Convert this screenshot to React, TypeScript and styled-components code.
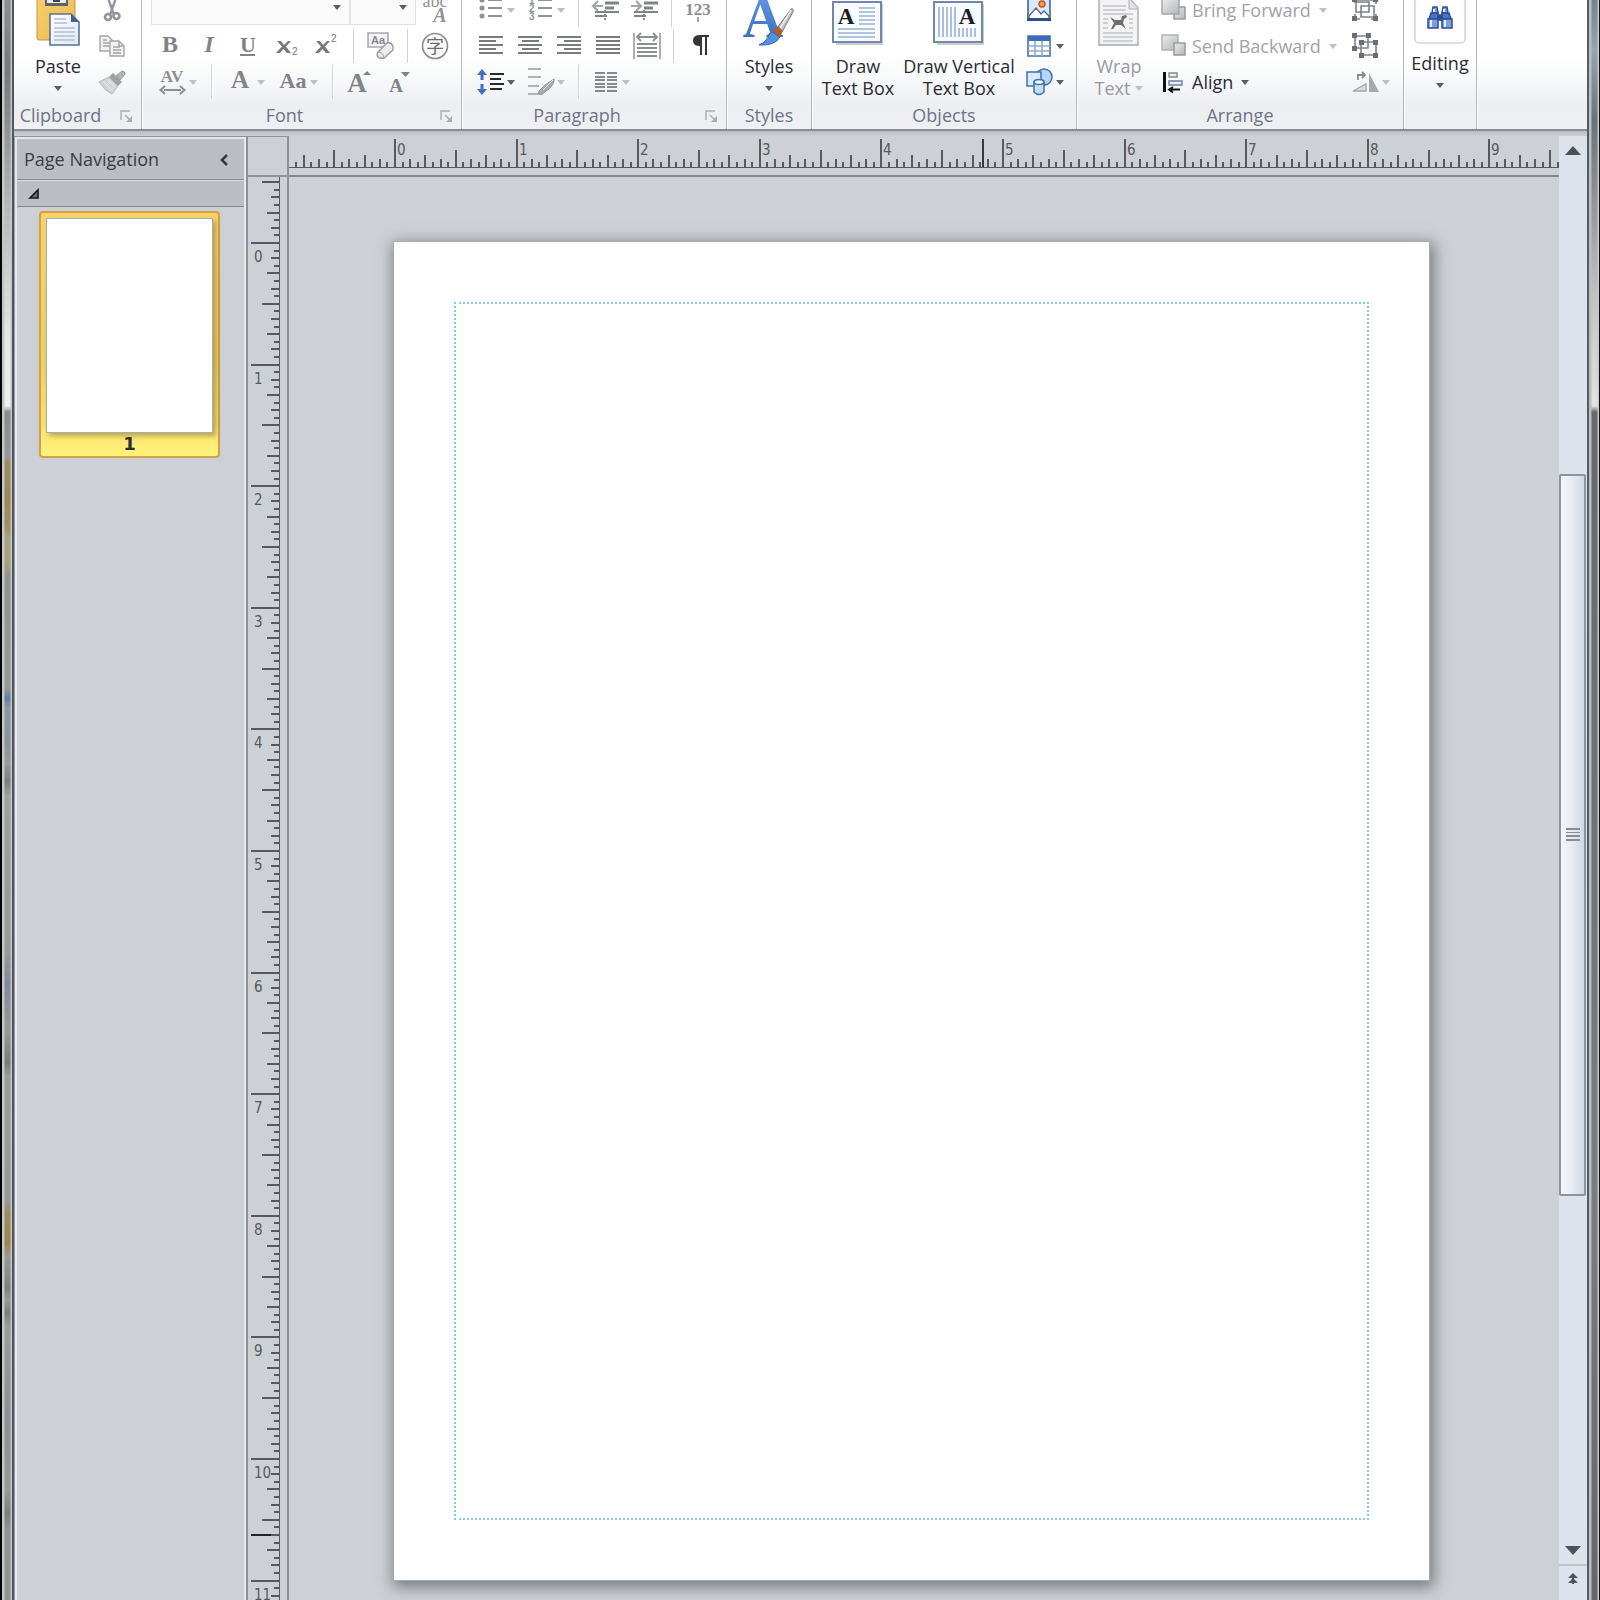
import React from "react";
import styled, { createGlobalStyle } from "styled-components";

const GlobalStyle = createGlobalStyle`
  *, *::before, *::after { box-sizing: border-box; }
  body {
    margin: 0;
    background: #cdd0d5;
    font-family: "Open Sans", "Noto Sans", sans-serif;
    font-size: 18px;
    color: #2b2b33;
  }
  button { font: inherit; color: inherit; border: 0; padding: 0; background: none; }
  button svg { overflow: visible; }
`;

const Window = styled.div`
  display: flex;
  height: 100vh;
  overflow: hidden;
`;

const LeftFrame = styled.div`
  flex: 0 0 14px;
  border-left: 2px solid #050507;
  border-right: 2px solid #50555b;
  background:
    linear-gradient(90deg, #c4c6c8 0 2px, transparent 3px 8px, #c4c6c8 9px 10px),
    linear-gradient(180deg,
      #8d8e91 0, #77797d 70px, #8b8d90 120px, #b4b5b7 200px, #e4e4e4 330px, #f0f0f0 406px,
      #8b8c8e 412px, #989899 456px, #988d62 464px, #9c8756 500px, #a09262 530px, #a5a181 536px, #a5a181 566px,
      #929292 574px, #999 688px, #5f80a3 698px, #8f979f 708px, #8b929b 740px, #999 764px,
      #7c7d7e 781px, #a0a0a0 796px, #999 950px, #838998 985px, #999 1030px, #7b7b7b 1063px, #9a9a9a 1076px,
      #999 1200px, #9b8d60 1212px, #9b8650 1244px, #999 1256px, #808080 1288px, #999 1300px,
      #7c7c7c 1313px, #9c9c9c 1326px, #8d9095 1420px, #999 1490px, #7e7e7e 1514px, #949496 1530px, #929292 100%);
`;

const RightFrame = styled.div`
  flex: 0 0 13px;
  border-left: 2px solid #575c63;
  border-right: 1px solid #111;
  background:
    linear-gradient(90deg, #b9bcc0 0 2px, transparent 3px 8px, #c9cacc 9px 10px),
    linear-gradient(180deg, #77818d 0, #9aa3ae 50px, #6c7279 120px, #8b8f93 190px, #c2c4c4 300px, #e2e2e2 406px, #66696e 412px, #6e7378 800px, #7a7d82 1190px, #64666b 100%);
`;

const Main = styled.main`
  flex: 1;
  min-width: 0;
  display: flex;
  flex-direction: column;
`;

/* ---------- Ribbon ---------- */

const Ribbon = styled.header`
  flex: none;
  display: flex;
  height: 131px;
  overflow: hidden;
  border-bottom: 2px solid #8a8e94;
  background: linear-gradient(#fff 0, #fff 42%, #f8f9fa 60%, #eceef2 82%, #eff0f4 100%);
`;

const Group = styled.section<{ $width: number }>`
  flex: 0 0 ${(p) => p.$width}px;
  display: flex;
  flex-direction: column;
  justify-content: flex-end;
  border-right: 1px solid #b3b7be;
  box-shadow: 1px 0 0 #fff;
`;

const GroupBody = styled.div<{ $pad?: number; $end?: number; $center?: boolean }>`
  flex: none;
  display: flex;
  align-items: flex-end;
  justify-content: ${(p) => (p.$center ? "center" : "flex-start")};
  padding-left: ${(p) => p.$pad ?? 0}px;
  padding-right: ${(p) => p.$end ?? 0}px;
`;

const GroupFooter = styled.div`
  position: relative;
  flex: none;
  height: 29px;
  display: flex;
  align-items: center;
  justify-content: center;
`;

const GroupTitle = styled.h2<{ $launcher?: boolean }>`
  margin: 0;
  padding-right: ${(p) => (p.$launcher ? 34 : 0)}px;
  font-size: 18px;
  line-height: 22px;
  font-weight: 400;
  color: #6e7486;
`;

const Launcher = styled.button`
  position: absolute;
  right: 7px;
  top: 8px;
  width: 16px;
  height: 16px;
  display: grid;
  place-items: center;
`;

const Stack = styled.div<{ $grow?: boolean }>`
  display: flex;
  flex-direction: column;
  flex: ${(p) => (p.$grow ? "1" : "none")};
`;

const Row = styled.div`
  display: flex;
  align-items: center;
  height: 36px;
`;

const IconButton = styled.button<{ $narrow?: boolean }>`
  width: ${(p) => (p.$narrow ? 33 : 39)}px;
  height: 36px;
  display: grid;
  place-items: center;
`;

const SplitButton = styled.button<{ $wide?: boolean }>`
  width: ${(p) => (p.$wide ? 53 : 50)}px;
  height: 36px;
  display: flex;
  align-items: center;
  justify-content: center;
  gap: 3px;
`;

const IconSlot = styled.span`
  width: 27px;
  display: grid;
  place-items: center;
`;

const ArrowSlot = styled.span`
  width: 8px;
  display: grid;
`;

const Divider = styled.span`
  width: 15px;
  height: 34px;
  background: linear-gradient(90deg, transparent 7px, #cfd3d9 7px 8px, #fff 8px 9px, transparent 9px);
`;

const Combo = styled.div<{ $width: number }>`
  position: relative;
  width: ${(p) => p.$width}px;
  height: 34px;
  svg { position: absolute; right: 9px; bottom: 17px; pointer-events: none; }
`;

const ComboSelect = styled.select`
  appearance: none;
  width: 100%;
  height: 32px;
  border: 1px solid #dfe2e8;
  border-radius: 0;
  background: #fafafb;
`;

const BigButton = styled.button<{ $width: number; $lift?: number; $dim?: boolean }>`
  width: ${(p) => p.$width}px;
  padding-bottom: ${(p) => p.$lift ?? 1}px;
  display: flex;
  flex-direction: column;
  align-items: center;
  white-space: nowrap;
  color: ${(p) => (p.$dim ? "#9a9a9e" : "inherit")};
`;

const BigIcon = styled.span`
  height: 48px;
  margin-bottom: 8px;
  display: grid;
  place-items: center;
`;

const BigLine = styled.span`
  height: 22px;
  line-height: 22px;
  display: flex;
  align-items: center;
  gap: 5px;
`;

const Command = styled.button<{ $dim?: boolean }>`
  height: 36px;
  padding-left: 4px;
  display: flex;
  align-items: center;
  gap: 5px;
  line-height: 22px;
  white-space: nowrap;
  color: ${(p) => (p.$dim ? "#a2a2a6" : "inherit")};
  svg:last-child { margin-left: 3px; }
`;

const FramedIcon = styled.span`
  width: 52px;
  height: 52px;
  margin-bottom: 8px;
  display: flex;
  align-items: flex-end;
  justify-content: center;
  padding-bottom: 13px;
  border: 2px solid #dcdfe7;
  border-radius: 5px;
  background: #fff;
`;

const Arrow = ({ dim = false, hidden = false }: { dim?: boolean; hidden?: boolean }) => (
  <svg width="8" height="5" viewBox="0 0 8 5" visibility={hidden ? "hidden" : "visible"} aria-hidden="true">
    <path d="M0 0H8L4 5Z" fill={dim ? "#bcc0c5" : "#5b5e63"} />
  </svg>
);

const LauncherIcon = () => (
  <svg width="13" height="13" viewBox="0 0 13 13" fill="none" stroke="#a9adb3" strokeWidth="1.4" aria-hidden="true">
    <path d="M1 10V1H10" />
    <path d="M5 5L10 10" />
    <path d="M12 6V12H6Z" fill="#a9adb3" stroke="none" />
  </svg>
);

/* ---------- Icons ---------- */

const serif = '"Liberation Serif", serif';

const PasteIcon = () => (
  <svg width="46" height="48" viewBox="0 0 46 48">
    <defs>
      <linearGradient id="board" x1="0" y1="0" x2="1" y2="1">
        <stop offset="0" stopColor="#f7cf6c" />
        <stop offset="1" stopColor="#e9b84f" />
      </linearGradient>
      <linearGradient id="sheet" x1="0" y1="0" x2="1" y2="1">
        <stop offset="0" stopColor="#fff" />
        <stop offset="1" stopColor="#dde7f5" />
      </linearGradient>
    </defs>
    <rect x="2" y="0" width="38" height="41" rx="2" fill="url(#board)" stroke="#c99540" />
    <path d="M10 0H33V7H10Z" fill="#5e626c" />
    <path d="M12 0H31V4H12Z" fill="#e9ebef" />
    <path d="M18 0h7v3h-7z" fill="#444" />
    <path d="M15 15H36L44 23V46H15Z" fill="url(#sheet)" stroke="#5b7193" strokeWidth="1.6" />
    <path d="M36 15V23H44Z" fill="#3d6097" />
    <path d="M19 20H31M19 24H32M19 29H40M19 33H40M19 37H40M19 41H40" stroke="#b4bed3" strokeWidth="1.3" />
  </svg>
);

const CutIcon = () => (
  <svg width="20" height="30" viewBox="0 0 20 30" fill="none" stroke="#929599">
    <path d="M5 0L12 20M15 0L8 20" strokeWidth="2.4" />
    <circle cx="6" cy="22" r="3" strokeWidth="2.6" />
    <circle cx="14.500" cy="21" r="3" strokeWidth="2.6" />
  </svg>
);

const CopyIcon = () => (
  <svg width="26" height="22" viewBox="0 0 26 22" fill="#f2f2f2" stroke="#a3a5a8" strokeWidth="1.4">
    <path d="M1 1H9L13 5V16H1Z" />
    <path d="M4 5H8M4 8H10M4 11H10" />
    <path d="M11 6H20L25 11V21H11Z" />
    <path d="M20 6V11H25M14 12H21M14 15H22M14 18H22" fill="none" />
  </svg>
);

const FormatPainterIcon = () => (
  <svg width="28" height="25" viewBox="0 0 28 25">
    <path d="M1 12L11 7L20 16L14 24Q6 20 1 12Z" fill="#d4d5d6" stroke="#b1b3b5" />
    <path d="M11 7L15 3L24 12L20 16Z" fill="#9fa1a4" />
    <path d="M18 6L24 1Q27 1 27 4L22 10Z" fill="#b0b2b4" stroke="#999b9e" />
    <path d="M6 12L14 20M10 10L17 17" stroke="#ececec" />
  </svg>
);

const Glyph = ({ children, size = 24, italic = false, underline = false }: { children: React.ReactNode; size?: number; italic?: boolean; underline?: boolean }) => (
  <svg width="27" height="26" viewBox="0 0 27 26" fontFamily={serif} fontWeight="700" fill="#808388" textAnchor="middle">
    <text x="13" y="19" fontSize={size} fontStyle={italic ? "italic" : "normal"}>{children}</text>
    {underline && <path d="M5 21H20V23H5Z" />}
  </svg>
);

const ScriptIcon = ({ up }: { up?: boolean }) => (
  <svg width="27" height="26" viewBox="0 0 27 26" fill="#74777c" fontFamily='"Liberation Sans", sans-serif' fontWeight="700">
    <path d="M3 8H7L10 12L14 8H17L12 13.500L17 20H13L9.500 16L6 20H2L8 13.500Z" />
    <text x="18" y={up ? 9 : 22} fontSize="10" fontWeight="400">2</text>
  </svg>
);

const SpacingIcon = () => (
  <svg width="27" height="26" viewBox="0 0 27 26" fill="#8b8e92">
    <text x="13" y="13" fontFamily={serif} fontSize="17" fontWeight="700" textAnchor="middle">AV</text>
    <path d="M5 21H22M6 17L1.500 21L6 25M21 17L25.500 21L21 25" fill="none" stroke="#8b8e92" strokeWidth="2" />
  </svg>
);

const SizeIcon = ({ grow }: { grow?: boolean }) => (
  <svg width="30" height="28" viewBox="0 0 30 28" fill="#808388">
    <text x="12" y="24" fontFamily={serif} fontSize={grow ? 27 : 19} fontWeight="700" textAnchor="middle">A</text>
    <path d={grow ? "M18 7L22 3L26 7Z" : "M17 4H26L21.500 9Z"} />
  </svg>
);

const ClearIcon = () => (
  <svg width="28" height="28" viewBox="0 0 28 28">
    <path d="M1 1H21V15H1Z" fill="#f2f2f2" stroke="#a9abae" strokeWidth="1.6" />
    <text x="11" y="12" fontFamily='"Liberation Sans", sans-serif' fontWeight="700" fontSize="11" textAnchor="middle" fill="#85888c">Aa</text>
    <path d="M11 20L20 11Q24 10 26 14V18L17 26Q11 27 10 23Z" fill="#ececec" stroke="#9a9c9f" strokeWidth="1.4" />
    <path d="M11 20Q16 20 17 26" fill="none" stroke="#9a9c9f" />
  </svg>
);

const EncloseIcon = () => (
  <svg width="28" height="28" viewBox="0 0 28 28">
    <circle cx="14" cy="14" r="12.500" fill="#fafafa" stroke="#8b8d91" strokeWidth="1.6" />
    <text x="14" y="21" fontFamily='"Noto Sans CJK SC", sans-serif' fontSize="18" textAnchor="middle" fill="#6a6c70">字</text>
  </svg>
);

const PhoneticIcon = () => (
  <svg width="28" height="34" viewBox="0 0 28 34" fill="#8f9296" fontFamily={serif}>
    <text x="13" y="14" fontSize="18" textAnchor="middle">abc</text>
    <text x="18" y="29" fontSize="20" fontWeight="700" fontStyle="italic" textAnchor="middle">A</text>
  </svg>
);

const BulletsIcon = ({ numbers }: { numbers?: boolean }) => (
  <svg width="26" height="32" viewBox="0 0 26 32" fill="#8f9296">
    {[6, 14, 22].map((y, i) => (
      <g key={y}>
        {numbers ? (
          <text x="1" y={y + 4} fontFamily='"Liberation Sans", sans-serif' fontSize="10" fontWeight="700">{i + 1}</text>
        ) : (
          <circle cx="4" cy={y} r="2.500" />
        )}
        <path d={`M10 ${y}H24`} stroke="#8f9296" strokeWidth="2" />
      </g>
    ))}
  </svg>
);

const IndentIcon = ({ right }: { right?: boolean }) => (
  <svg width="28" height="32" viewBox="0 0 28 32" fill="none" stroke="#808388" strokeWidth="1.8">
    <path d="M13 4H27M3 18H27M3 22H15" />
    <path d="M13 9H27M13 14H22" strokeWidth="3" />
    <path d="M13 16V27" strokeDasharray="2 2" />
    <path d={right ? "M0 12H9M5 7L10 12L5 17" : "M2 12H11M6 7L1 12L6 17"} stroke="#a3a5a8" strokeWidth="2.2" />
  </svg>
);

const NumbersIcon = () => (
  <svg width="27" height="36" viewBox="0 0 27 36" fill="#8b8e92">
    <path d="M13 2V8M13 25V30" stroke="#8b8e92" strokeWidth="1.6" />
    <text x="13" y="23" fontFamily={serif} fontWeight="700" fontSize="17" textAnchor="middle">123</text>
  </svg>
);

type Align = "left" | "center" | "right" | "full";

const AlignIcon = ({ align }: { align: Align }) => {
  const x = align === "left" ? 0 : align === "center" ? 4 : 7;
  return (
    <svg width="24" height="20" viewBox="0 0 24 20" fill="#787b80">
      {[0, 4, 8, 12, 16].map((y, i) => {
        const short = align !== "full" && i % 2 === 1;
        return <rect key={y} x={short ? x : 0} y={y} width={short ? 17 : 24} height="2" />;
      })}
    </svg>
  );
};

const DistributeIcon = () => (
  <svg width="28" height="27" viewBox="0 0 28 27" fill="none" stroke="#8b8e92">
    <path d="M1 0V26M27 0V26" strokeWidth="1.4" />
    <path d="M4 4H24M8 0L4 4L8 8M20 0L24 4L20 8" strokeWidth="1.8" />
    <path d="M4 11H24M4 15H24M4 19H24M4 23H24" strokeWidth="2" />
  </svg>
);

const PilcrowIcon = () => (
  <svg width="20" height="24" viewBox="0 0 20 24" fill="#333539">
    <path d="M9 1H18V3H16V21H14V3H11V21H9V12Q2 12 2 6.500Q2 1 9 1Z" />
  </svg>
);

const LineSpacingIcon = () => (
  <svg width="27" height="28" viewBox="0 0 27 28">
    <path d="M5 1L10 7H6.500V12H3.500V7H0ZM5 27L10 21H6.500V16H3.500V21H0Z" fill="#3f6fc0" />
    <path d="M13 6H27M13 11H24M13 16H27M13 21H25" stroke="#26282b" strokeWidth="2" />
  </svg>
);

const ShadingIcon = () => (
  <svg width="28" height="28" viewBox="0 0 28 28">
    <path d="M1 1H14M1 9H14M1 18H12M1 26H16" stroke="#b0b2b5" strokeWidth="2" />
    <path d="M27 11Q28 15 22 21L15 26Q10 27 12 23L18 17Z" fill="#a9abae" stroke="#94969a" />
    <path d="M26 12L16 22" stroke="#e2e3e4" />
  </svg>
);

const ColumnsIcon = () => (
  <svg width="22" height="20" viewBox="0 0 22 20" stroke="#85888c" strokeWidth="1.8">
    {[1, 5, 8, 12, 15, 19].map((y) => <path key={y} d={`M0 ${y}H10M12 ${y}H22`} />)}
  </svg>
);

const StylesIcon = () => (
  <svg width="50" height="50" viewBox="0 0 50 50">
    <defs>
      <linearGradient id="letterA" x1="0" y1="0" x2="0" y2="1">
        <stop offset="0" stopColor="#6d9ee6" />
        <stop offset="1" stopColor="#2f66b8" />
      </linearGradient>
    </defs>
    <text x="19" y="38" fontFamily={serif} fontSize="56" fontWeight="700" textAnchor="middle" fill="url(#letterA)">A</text>
    <path d="M33 29L47 10Q50 9 49 13L38 33Z" fill="#b9bcc0" stroke="#7a7d83" />
    <path d="M47 11L36 30" stroke="#eceef0" strokeWidth="1.5" />
    <path d="M28 33L34 27L39 32L36 38Q30 38 28 33Z" fill="#a9622e" />
    <path d="M28 33L36 38Q31 47 15 46Q24 42 25 35Z" fill="#5791dc" stroke="#2c66b4" />
  </svg>
);

const TextBoxIcon = ({ vertical }: { vertical?: boolean }) => (
  <svg width="52" height="46" viewBox="0 0 52 46">
    <path d="M4 4H51V45H4Z" fill="#c8ccd6" />
    <path d="M1 2H49V42H1Z" fill="#f8fbff" stroke="#7487a6" strokeWidth="2" />
    <text x={vertical ? 34 : 14} y="24" fontFamily={serif} fontSize="23" fontWeight="700" textAnchor="middle" fill="#1b1d24">A</text>
    <path
      d={
        vertical
          ? "M6 7V37M10 7V37M14 7V37M18 7V37M22 7V37M26 28V37M30 28V37M34 28V37M38 28V37M42 28V37"
          : "M27 8H43M27 12H43M27 16H43M27 20H43M27 24H43M6 29H43M6 33H43M6 37H43"
      }
      stroke="#98b3d2" strokeWidth="1.6"
    />
  </svg>
);

const PictureIcon = () => (
  <svg width="24" height="32" viewBox="0 0 24 32">
    <path d="M1 1H23V25H1Z" fill="#d9e8fb" stroke="#42639a" strokeWidth="1.6" />
    <circle cx="15" cy="10" r="3" fill="#f6a13a" stroke="#c4502e" strokeWidth="1.4" />
    <path d="M2 22L9 14L14 20L17 17L22 22V25H2Z" fill="#fff" stroke="#54698c" strokeWidth="1.4" />
    <path d="M0 24H24V27H0Z" fill="#2c4d8a" />
  </svg>
);

const TableIcon = () => (
  <svg width="24" height="22" viewBox="0 0 24 22">
    <path d="M1 1H23V21H1Z" fill="#fff" stroke="#4a6fae" strokeWidth="1.6" />
    <path d="M1 1H23V6H1Z" fill="#3f6cb8" />
    <path d="M1 11H23M1 16H23M8 6V21M15 6V21" stroke="#8eabd6" strokeWidth="1.6" />
  </svg>
);

const ShapesIcon = () => (
  <svg width="27" height="28" viewBox="0 0 27 28" stroke="#3e6fae" strokeWidth="1.5">
    <circle cx="18" cy="9" r="8" fill="#b9d4f1" />
    <path d="M1 4H15V18H1Z" fill="#dcebfb" />
    <path d="M8 14V24Q13 29 18 24V14Z" fill="#c5e0f6" />
    <ellipse cx="13" cy="14" rx="5" ry="2.500" fill="#eef7ff" />
  </svg>
);

const WrapIcon = () => (
  <svg width="42" height="50" viewBox="0 0 42 50">
    <path d="M1 0H32L40 9V46H1Z" fill="#f3f3f4" stroke="#b9bbbe" strokeWidth="1.8" />
    <path d="M31 0V10H40" fill="#e2e2e3" stroke="#b0b2b5" />
    <path d="M5 7H28M5 11H28M5 15H35M5 20H10M31 20H35M5 24H10M31 24H35M5 29H10M31 29H35M5 34H35M5 38H35M5 42H35" stroke="#c3c5c8" strokeWidth="1.4" />
    <path d="M12 18L17 21H23L24 17L28 16L29 18L26 20L25 24L28 30L23 26H18L15 30H13L16 24Z" fill="#6c6e72" />
  </svg>
);

const LayerIcon = ({ back }: { back?: boolean }) => (
  <svg width="26" height="24" viewBox="0 0 26 24">
    <defs>
      <linearGradient id="layer" x1="0" y1="0" x2="1" y2="1">
        <stop offset="0" stopColor="#ededed" />
        <stop offset="1" stopColor="#b3b5b8" />
      </linearGradient>
    </defs>
    {back && <path d="M1 1H17V16H1Z" fill="url(#layer)" stroke="#b0b2b4" strokeWidth="1.500" />}
    <path d="M13 9H24V21H13Z" fill="url(#layer)" stroke="#999b9e" strokeWidth="1.500" />
    {!back && <path d="M1 1H18V16H1Z" fill="url(#layer)" stroke="#a6a8ab" strokeWidth="1.500" />}
  </svg>
);

const AlignObjectsIcon = () => (
  <svg width="26" height="22" viewBox="0 0 26 22">
    <path d="M2 1H5V21H2Z" fill="#101114" />
    <path d="M8 2H16V6H8Z" fill="#eee" stroke="#85888c" strokeWidth="1.4" />
    <path d="M8 10H21V14H8Z" fill="#e4eefb" stroke="#6c7f9e" strokeWidth="1.4" />
    <path d="M19 18.500H10M12 16L8 18.500L12 21.500" fill="none" stroke="#101114" strokeWidth="1.8" />
  </svg>
);

const GroupIcon = ({ spread }: { spread?: boolean }) => (
  <svg width="27" height="26" viewBox="0 0 27 26" fill="none" stroke="#808388" strokeWidth="1.6">
    {spread ? (
      <path d="M3 3H16V15H3ZM9 9H24V22H9Z" />
    ) : (
      <path d="M3 0V6M0 3H18M24 3H18M24 3V7M3 17V22M24 17V22M3 22H8M19 22H24M4 5H17V15H4ZM9 9H22V20H9Z" />
    )}
    <path
      fill="#6b6e73" stroke="none"
      d={
        spread
          ? "M0 0h5v5h-5zM14 0h5v5h-5zM0 13h5v5h-5zM7 7h5v5h-5zM21 7h5v5h-5zM7 20h5v5h-5zM21 20h5v5h-5z"
          : "M0 0h5v5h-5zM21 0h5v5h-5zM0 19h5v5h-5zM21 19h5v5h-5z"
      }
    />
  </svg>
);

const RotateIcon = () => (
  <svg width="27" height="22" viewBox="0 0 27 22" fill="#a6a8ab">
    <path d="M17 2V21H27Z" />
    <path d="M1 20L14 13V20Z" fill="#dcdddf" stroke="#a6a8ab" strokeWidth="1.4" />
    <path d="M6 9V4H12M10 1L13 4L10 7" fill="none" stroke="#85888c" strokeWidth="1.8" />
  </svg>
);

const BinocularsIcon = () => (
  <svg width="26" height="24" viewBox="0 0 26 24" fill="#7da0dc" stroke="#2b4f97" strokeWidth="1.5">
    <path d="M6 2H10L11 8H5ZM16 2H20L21 8H15Z" />
    <path d="M4 8H11V14H2ZM15 8H22L24 14H15Z" fill="#4c74bc" />
    <path d="M1 14H11V23H1ZM15 14H25V23H15Z" />
    <path d="M11 10H15V15H11Z" fill="#2b4f97" />
    <path d="M4 15V22M18 15V22M7 4V7M17 4V7" stroke="#e4eefc" strokeWidth="2" />
  </svg>
);

/* ---------- Workspace ---------- */

const Workspace = styled.div`
  flex: 1;
  min-height: 0;
  display: flex;
  padding-top: 5px;
  background: linear-gradient(#b9bcc1 0, #cdd0d5 5px);
`;

const NavPane = styled.aside`
  flex: 0 0 234px;
  border-top: 1px solid #90949a;
  border-left: 1px solid #9a9ea4;
  border-right: 2px solid #8d9299;
`;

const NavInner = styled.div`
  height: 100%;
  border: 2px solid #e6e8ec;
  border-bottom: 0;
`;

const NavHeader = styled.div`
  height: 41px;
  display: flex;
  align-items: center;
  justify-content: space-between;
  padding: 0 16px 0 7px;
  background: #bbbec3;
  border-bottom: 1px solid #85898f;
`;

const NavTitle = styled.h2`
  margin: 0;
  font-size: 18px;
  line-height: 22px;
  font-weight: 400;
  color: #3b3b45;
`;

const SectionToggle = styled.button`
  width: 100%;
  height: 27px;
  display: flex;
  align-items: center;
  padding-left: 12px;
  background: #bbbec3;
  border-top: 1px solid #d9dbdf;
  border-bottom: 1px solid #85898f;
`;

const Thumb = styled.button`
  width: 181px;
  margin: 4px 0 0 22px;
  padding: 5px 5px 1px;
  border: 2px solid #d3a047;
  border-radius: 4px;
  background: linear-gradient(#fbd468 0, #efd060 60%, #f6e06c 85%, #fff37c 100%);
`;

const ThumbPage = styled.span`
  display: block;
  height: 215px;
  background: #fff;
  border: 1px solid #a4aebe;
  box-shadow: 3px 3px 5px rgba(110, 90, 20, 0.45);
`;

const ThumbLabel = styled.span`
  display: block;
  font-family: "DejaVu Sans", sans-serif;
  font-size: 18px;
  line-height: 22px;
  font-weight: 700;
`;

const Editor = styled.section`
  flex: 1;
  min-width: 0;
  display: grid;
  grid-template: 41px 1fr / 41px 1fr;
`;

const Corner = styled.div`
  border-top: 1px solid #8d9299;
  border-right: 2px solid #8d9299;
  border-bottom: 2px solid #8d9299;
`;

const TopRuler = styled.div`
  overflow: hidden;
  border-bottom: 2px solid #83888f;
`;

const SideRuler = styled.div`
  overflow: hidden;
  border-right: 2px solid #8d9299;
`;

const RulerSvg = styled.svg`
  display: block;
  width: 100%;
  height: 100%;
  font-family: "DejaVu Sans Condensed", "DejaVu Sans", sans-serif;
  font-size: 15px;
  fill: #56595f;
`;

const Canvas = styled.div`
  overflow: hidden;
  padding: 64px 104px;
`;

const Page = styled.article`
  width: 1037px;
  height: 1340px;
  padding: 60px;
  background: #fff;
  border: 1px solid #a3abb4;
  box-shadow: 2px 4px 14px 2px rgba(60, 66, 74, 0.6);
`;

const Margins = styled.div`
  height: 100%;
  border: 2px dotted #86c5ff;
`;

const ScrollColumn = styled.div`
  flex: 0 0 28px;
  display: flex;
  flex-direction: column;
  background: #dee2eb;
`;

const ScrollButton = styled.button`
  height: 28px;
  display: grid;
  place-items: center;
`;

const Track = styled.div`
  flex: 1;
  display: grid;
  grid-template-rows: 310fr 721fr 340fr;
`;

const Handle = styled.div`
  grid-row: 2;
  width: 27px;
  display: grid;
  place-items: center;
  border: 2px solid #8d949d;
  border-radius: 2px;
  background: linear-gradient(90deg, #f6f7fa, #e6e9ef 55%, #cfd8e2);
`;

const PageJump = styled.button`
  height: 36px;
  display: flex;
  justify-content: center;
  padding-top: 7px;
  border-top: 2px solid #c2c5cb;
`;

const INCH = 121.6;

const tickLength = (i: number) => {
  if (i % 16 === 0) return 28;
  if (i % 8 === 0) return 17;
  if (i % 4 === 0) return 12;
  return i % 2 === 0 ? 8 : 5;
};

const Ruler = ({ vertical, origin, marker }: { vertical?: boolean; origin: number; marker: number }) => {
  const ticks: React.ReactNode[] = [];
  const base = 31;
  for (let i = -13; i <= 12 * 16; i++) {
    const at = Math.round(origin + (i * INCH) / 16);
    const start = base - tickLength(i);
    ticks.push(
      vertical
        ? <rect key={i} x={start} y={at} width={base - start} height="2" />
        : <rect key={i} x={at} y={start} width="2" height={base - start} />
    );
    if (i >= 0 && i % 16 === 0) {
      ticks.push(
        vertical
          ? <text key={`n${i}`} x="6" y={at + 20}>{i / 16}</text>
          : <text key={`n${i}`} x={at + 3} y="19">{i / 16}</text>
      );
    }
  }
  return (
    <RulerSvg role="img" aria-label={vertical ? "Vertical ruler" : "Horizontal ruler"} shapeRendering="crispEdges">
      {ticks}
      {vertical ? (
        <>
          <rect x={base} y="0" width="1" height="100%" />
          <rect x="3" y={marker} width="20" height="2" fill="#222428" />
        </>
      ) : (
        <>
          <rect x="0" y={base} width="100%" height="1" />
          <rect x={marker} y="3" width="2" height="28" fill="#37393e" />
        </>
      )}
    </RulerSvg>
  );
};

const Footer = ({ title, launcher }: { title: string; launcher?: boolean }) => (
  <GroupFooter>
    <GroupTitle $launcher={launcher}>{title}</GroupTitle>
    {launcher && <Launcher aria-label={`${title} options`}><LauncherIcon /></Launcher>}
  </GroupFooter>
);

const Split = ({ label, wide, dim, plain, children }: { label: string; wide?: boolean; dim?: boolean; plain?: boolean; children: React.ReactNode }) => (
  <SplitButton $wide={wide} aria-label={label}>
    <IconSlot>{children}</IconSlot>
    <ArrowSlot><Arrow dim={dim} hidden={plain} /></ArrowSlot>
  </SplitButton>
);

export default function App() {
  return (
    <>
      <GlobalStyle />
      <Window>
        <LeftFrame />
        <Main>
          <Ribbon>
            <Group $width={128}>
              <GroupBody $pad={7}>
                <BigButton $width={74}>
                  <BigIcon><PasteIcon /></BigIcon>
                  <BigLine>Paste</BigLine>
                  <BigLine><Arrow /></BigLine>
                </BigButton>
                <Stack>
                  <Row><IconButton $narrow aria-label="Cut"><CutIcon /></IconButton></Row>
                  <Row><IconButton $narrow aria-label="Copy"><CopyIcon /></IconButton></Row>
                  <Row><IconButton $narrow aria-label="Format painter"><FormatPainterIcon /></IconButton></Row>
                </Stack>
              </GroupBody>
              <Footer title="Clipboard" launcher />
            </Group>

            <Group $width={320}>
              <GroupBody $pad={9}>
                <Stack>
                  <Row>
                    <Combo $width={199}><ComboSelect aria-label="Font" /><Arrow /></Combo>
                    <Combo $width={66}><ComboSelect aria-label="Font size" /><Arrow /></Combo>
                    <IconButton aria-label="Phonetic guide"><PhoneticIcon /></IconButton>
                  </Row>
                  <Row>
                    <IconButton aria-label="Bold"><Glyph>B</Glyph></IconButton>
                    <IconButton aria-label="Italic"><Glyph italic>I</Glyph></IconButton>
                    <IconButton aria-label="Underline"><Glyph size={22} underline>U</Glyph></IconButton>
                    <IconButton aria-label="Subscript"><ScriptIcon /></IconButton>
                    <IconButton aria-label="Superscript"><ScriptIcon up /></IconButton>
                    <Divider />
                    <IconButton aria-label="Clear formatting"><ClearIcon /></IconButton>
                    <Divider />
                    <IconButton aria-label="Enclose characters"><EncloseIcon /></IconButton>
                  </Row>
                  <Row>
                    <Split label="Character spacing" wide dim><SpacingIcon /></Split>
                    <Divider />
                    <Split label="Font color" wide dim><Glyph size={25}>A</Glyph></Split>
                    <Split label="Change case" wide dim><Glyph size={22}>Aa</Glyph></Split>
                    <Divider />
                    <IconButton aria-label="Grow font"><SizeIcon grow /></IconButton>
                    <IconButton aria-label="Shrink font"><SizeIcon /></IconButton>
                  </Row>
                </Stack>
              </GroupBody>
              <Footer title="Font" launcher />
            </Group>

            <Group $width={265}>
              <GroupBody $pad={9}>
                <Stack>
                  <Row>
                    <Split label="Bullets" dim><BulletsIcon /></Split>
                    <Split label="Numbering" dim><BulletsIcon numbers /></Split>
                    <Divider />
                    <IconButton aria-label="Decrease indent"><IndentIcon /></IconButton>
                    <IconButton aria-label="Increase indent"><IndentIcon right /></IconButton>
                    <Divider />
                    <IconButton aria-label="Number style"><NumbersIcon /></IconButton>
                  </Row>
                  <Row>
                    <IconButton aria-label="Align left"><AlignIcon align="left" /></IconButton>
                    <IconButton aria-label="Center"><AlignIcon align="center" /></IconButton>
                    <IconButton aria-label="Align right"><AlignIcon align="right" /></IconButton>
                    <IconButton aria-label="Justify"><AlignIcon align="full" /></IconButton>
                    <IconButton aria-label="Distribute"><DistributeIcon /></IconButton>
                    <Divider />
                    <IconButton aria-label="Special characters"><PilcrowIcon /></IconButton>
                  </Row>
                  <Row>
                    <Split label="Line spacing"><LineSpacingIcon /></Split>
                    <Split label="Paragraph shading" dim><ShadingIcon /></Split>
                    <Divider />
                    <Split label="Columns" dim><ColumnsIcon /></Split>
                  </Row>
                </Stack>
              </GroupBody>
              <Footer title="Paragraph" launcher />
            </Group>

            <Group $width={85}>
              <GroupBody $center>
                <BigButton $width={78}>
                  <BigIcon><StylesIcon /></BigIcon>
                  <BigLine>Styles</BigLine>
                  <BigLine><Arrow /></BigLine>
                </BigButton>
              </GroupBody>
              <Footer title="Styles" />
            </Group>

            <Group $width={265}>
              <GroupBody $pad={4}>
                <BigButton $width={84}>
                  <BigIcon><TextBoxIcon /></BigIcon>
                  <BigLine>Draw</BigLine>
                  <BigLine>Text Box</BigLine>
                </BigButton>
                <BigButton $width={118}>
                  <BigIcon><TextBoxIcon vertical /></BigIcon>
                  <BigLine>Draw Vertical</BigLine>
                  <BigLine>Text Box</BigLine>
                </BigButton>
                <Stack>
                  <Row><Split label="Picture" wide plain><PictureIcon /></Split></Row>
                  <Row><Split label="Table" wide><TableIcon /></Split></Row>
                  <Row><Split label="Shapes" wide><ShapesIcon /></Split></Row>
                </Stack>
              </GroupBody>
              <Footer title="Objects" />
            </Group>

            <Group $width={327}>
              <GroupBody $pad={4} $end={6}>
                <BigButton $width={76} $dim>
                  <BigIcon><WrapIcon /></BigIcon>
                  <BigLine>Wrap</BigLine>
                  <BigLine>Text<Arrow dim /></BigLine>
                </BigButton>
                <Stack $grow>
                  <Row><Command $dim><LayerIcon />Bring Forward<Arrow dim /></Command></Row>
                  <Row><Command $dim><LayerIcon back />Send Backward<Arrow dim /></Command></Row>
                  <Row><Command><AlignObjectsIcon />Align<Arrow /></Command></Row>
                </Stack>
                <Stack>
                  <Row><Split label="Group" wide plain><GroupIcon /></Split></Row>
                  <Row><Split label="Ungroup" wide plain><GroupIcon spread /></Split></Row>
                  <Row><Split label="Rotate" wide dim><RotateIcon /></Split></Row>
                </Stack>
              </GroupBody>
              <Footer title="Arrange" />
            </Group>

            <Group $width={73}>
              <GroupBody $center>
                <BigButton $width={72} $lift={33}>
                  <FramedIcon><BinocularsIcon /></FramedIcon>
                  <BigLine>Editing</BigLine>
                  <BigLine><Arrow /></BigLine>
                </BigButton>
              </GroupBody>
            </Group>
          </Ribbon>

          <Workspace>
            <NavPane>
              <NavInner>
                <NavHeader>
                  <NavTitle>Page Navigation</NavTitle>
                  <button aria-label="Collapse pane">
                    <svg width="8" height="12" viewBox="0 0 8 12" fill="none" stroke="#3a3a3e" strokeWidth="2.6">
                      <path d="M7 1L2 6L7 11" />
                    </svg>
                  </button>
                </NavHeader>
                <SectionToggle aria-label="Toggle section">
                  <svg width="10" height="10" viewBox="0 0 10 10">
                    <path d="M9 1V9H1Z" fill="#6b6d71" stroke="#18191b" strokeWidth="1.6" />
                  </svg>
                </SectionToggle>
                <Thumb>
                  <ThumbPage />
                  <ThumbLabel>1</ThumbLabel>
                </Thumb>
              </NavInner>
            </NavPane>
            <Editor>
              <Corner />
              <TopRuler><Ruler origin={105} marker={693} /></TopRuler>
              <SideRuler><Ruler vertical origin={65} marker={1357} /></SideRuler>
              <Canvas>
                <Page><Margins /></Page>
              </Canvas>
            </Editor>
            <ScrollColumn>
              <ScrollButton aria-label="Scroll up">
                <svg width="16" height="9" viewBox="0 0 16 9"><path d="M0 9L8 0L16 9Z" fill="#4e5156" /></svg>
              </ScrollButton>
              <Track>
                <Handle>
                  <svg width="14" height="13" viewBox="0 0 14 13" fill="#888d95">
                    <path d="M0 0H14V2H0ZM0 4H14V5H0ZM0 7H14V9H0ZM0 11H14V13H0Z" />
                  </svg>
                </Handle>
              </Track>
              <ScrollButton aria-label="Scroll down">
                <svg width="16" height="9" viewBox="0 0 16 9"><path d="M0 0L8 9L16 0Z" fill="#4e5156" /></svg>
              </ScrollButton>
              <PageJump aria-label="Previous page">
                <svg width="10" height="11" viewBox="0 0 10 11" fill="#4e5156">
                  <path d="M5 0L10 5H6V6L10 10H6V11H4V10H0L4 6V5H0Z" />
                </svg>
              </PageJump>
            </ScrollColumn>
          </Workspace>
        </Main>
        <RightFrame />
      </Window>
    </>
  );
}
